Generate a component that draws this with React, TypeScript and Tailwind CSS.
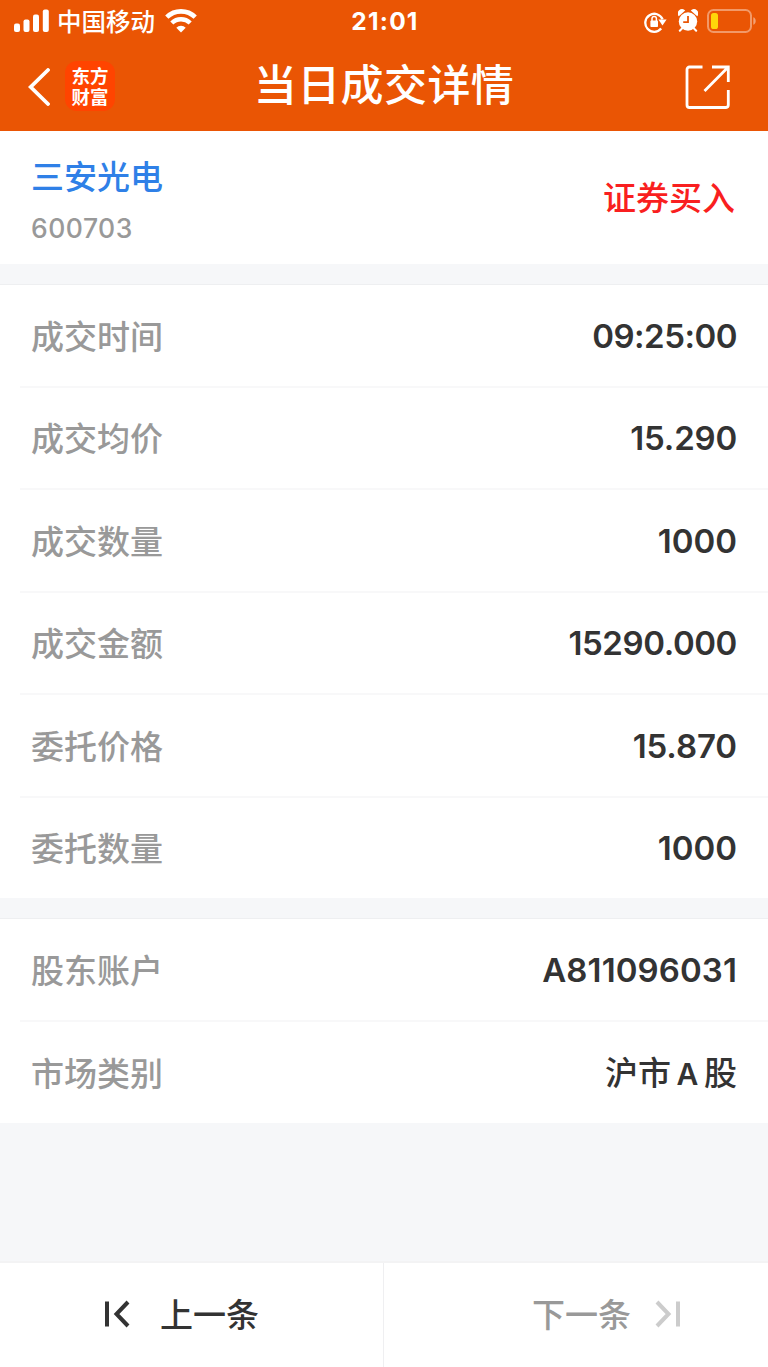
import clsx from "clsx";

const TRADE_ROWS = [
  { label: "成交时间", value: "09:25:00", tracking: "tracking-[-0.5px]" },
  { label: "成交均价", value: "15.290", tracking: "tracking-[-0.2px]" },
  { label: "成交数量", value: "1000", tracking: "tracking-normal" },
  { label: "成交金额", value: "15290.000", tracking: "tracking-[-0.4px]" },
  { label: "委托价格", value: "15.870", tracking: "tracking-[-0.1px]" },
  { label: "委托数量", value: "1000", tracking: "tracking-normal" },
];

function StatusBar() {
  return (
    <div className="grid h-[43px] grid-cols-[1fr_auto_1fr] items-center pr-3 pl-3.5">
      <div className="flex items-center">
        <svg className="-mt-0.5" width="36" height="24" viewBox="0 0 36 24" fill="white">
          <rect x="0" y="14.5" width="6" height="8.5" rx="2" />
          <rect x="9.5" y="10.5" width="6" height="12.5" rx="2" />
          <rect x="19" y="5.5" width="6" height="17.5" rx="2" />
          <rect x="28.8" y="0.5" width="6" height="22.5" rx="2" />
        </svg>
        <span className="mt-0.5 ml-[7px] text-[24.5px] leading-none font-medium">中国移动</span>
        <svg className="-mt-0.5 ml-2.5" width="32" height="24" viewBox="0 0 32 24" fill="none" stroke="white">
          <path d="M1.8 8.2a20.2 20.2 0 0 1 28.4 0" strokeWidth="4.6" />
          <path d="M6.8 14a13.2 13.2 0 0 1 18.4 0" strokeWidth="4.4" />
          <path d="M16 23.5l-4.7-4.8a6.8 6.8 0 0 1 9.4 0z" fill="white" stroke="none" />
        </svg>
      </div>
      <span className="text-[24.5px] leading-none font-bold tracking-[1.2px]">21:01</span>
      <div className="flex items-center justify-end">
        <svg width="23" height="22" viewBox="0 0 23 22" fill="none" stroke="white">
          <path d="M17.2 17.6A9 9 0 1 1 18.6 8.3" strokeWidth="2.3" />
          <path d="M14.4 8.6h8.2l-4.1 6z" fill="white" stroke="none" />
          <rect x="6.4" y="9.6" width="7.6" height="6.4" rx="0.8" fill="white" stroke="none" />
          <path d="M8 10.2V7.6a2.2 2.2 0 0 1 4.4 0v2.6" strokeWidth="1.5" />
        </svg>
        <svg className="-mt-0.5 ml-[11px]" width="20" height="23" viewBox="0 0 20 23">
          <circle cx="10" cy="12.5" r="9.2" fill="white" />
          <path d="M0.8 7.2A4 4 0 0 1 7.2 1.5zM19.2 7.2A4 4 0 0 0 12.8 1.5z" fill="white" />
          <path d="M4 19.5l-2.2 2.3M16 19.5l2.2 2.3" stroke="white" strokeWidth="2" strokeLinecap="round" />
          <path d="M10 7v6.2H5.2" fill="none" stroke="#ea5504" strokeWidth="1.8" />
        </svg>
        <svg className="-mt-0.5 ml-[9px]" width="49" height="24" viewBox="0 0 49 24">
          <rect x="1" y="1" width="43" height="22" rx="5.5" fill="none" stroke="white" strokeOpacity=".4" strokeWidth="2" />
          <rect x="4" y="4" width="7" height="16" rx="2.6" fill="#ffd60a" />
          <path d="M46.3 8.2c3.2 1.2 3.2 6.4 0 7.6z" fill="white" fillOpacity=".45" />
        </svg>
      </div>
    </div>
  );
}

function NavBar() {
  return (
    <div className="grid h-[88px] grid-cols-[1fr_auto_1fr] items-center pr-[38px] pl-7">
      <div className="flex items-center">
        <svg width="22" height="38" viewBox="0 0 22 38" fill="none" stroke="white" strokeWidth="3.8">
          <path d="M20 2L2.7 19 20 36" strokeLinecap="round" />
        </svg>
        <div className="-mt-0.5 ml-[15px] flex h-[50px] w-[50px] flex-col items-center justify-center rounded-xl bg-[#ff4400] pt-0.5 text-[18.5px] leading-[21px] font-bold">
          <span>东方</span>
          <span>财富</span>
        </div>
      </div>
      <h1 className="-mt-1 ml-[10px] text-[43px] leading-none font-medium tracking-[0.4px]">当日成交详情</h1>
      <svg className="justify-self-end" width="46" height="46" viewBox="0 0 46 46" fill="none" stroke="white" strokeWidth="2.8">
        <path d="M18.5 3H5.5A2.5 2.5 0 0 0 3 5.5V41A2.5 2.5 0 0 0 5.5 43.5H42A2.5 2.5 0 0 0 44.3 41V26" />
        <path d="M28 3H44.3V18M44 3.3L20.5 27" />
      </svg>
    </div>
  );
}

type DetailRowProps = {
  label: string;
  value: React.ReactNode;
  tracking?: string;
  last?: boolean;
};

function DetailRow({ label, value, tracking, last = false }: DetailRowProps) {
  return (
    <div
      className={clsx(
        "ml-5 flex flex-1 items-center justify-between pt-1 pr-[31px] pl-[11px]",
        !last && "border-b-2 border-[#f8f8f9]",
      )}
    >
      <span className="text-[33px] leading-none font-medium text-[#999999]">{label}</span>
      <span className={clsx("-mt-0.5 text-[33px] leading-none font-semibold text-[#333333]", tracking)}>{value}</span>
    </div>
  );
}

export default function App() {
  return (
    <div className="flex h-[1367px] w-[768px] flex-col overflow-hidden bg-[#f6f7f9] font-[Inter,'Noto_Sans_CJK_SC',sans-serif]">
      <header className="h-[131px] shrink-0 bg-[#ea5504] text-white">
        <StatusBar />
        <NavBar />
      </header>

      <section className="flex h-[133px] shrink-0 items-center justify-between bg-white pt-1 pr-[33px] pl-[31px]">
        <div className="flex flex-col">
          <span className="text-[33px] leading-[44px] font-medium text-[#2f80e7]">三安光电</span>
          <span className="mt-3 text-[26.5px] leading-[34px] font-medium tracking-[0.5px] text-[#999999]">600703</span>
        </div>
        <span className="-mt-0.5 text-[33px] leading-none font-medium text-[#f91f20]">证券买入</span>
      </section>

      <section className="mt-[21px] flex h-[613px] shrink-0 flex-col bg-white shadow-[0_-1px_0_#eeeff1]">
        {TRADE_ROWS.map((row, i) => (
          <DetailRow key={row.label} {...row} last={i === TRADE_ROWS.length - 1} />
        ))}
      </section>

      <section className="mt-[21px] flex h-[204px] shrink-0 flex-col bg-white shadow-[0_-1px_0_#eeeff1]">
        <DetailRow label="股东账户" value="A811096031" tracking="tracking-[0.1px]" />
        <DetailRow
          label="市场类别"
          value={
            <span className="font-medium [word-spacing:-3.2px]">
              沪市 <span className="text-[30px] font-semibold">A</span> 股
            </span>
          }
          last
        />
      </section>

      <footer className="mt-auto grid h-[106px] shrink-0 grid-cols-[384px_1fr] border-t-2 border-[#f3f3f4] bg-white text-[33px] leading-none font-medium">
        <button className="flex items-center border-r border-[#efeff1] pl-[104px] text-[#333333]">
          <svg className="-mt-0.5" width="26" height="28" viewBox="0 0 26 28" fill="none" stroke="currentColor" strokeWidth="4">
            <path d="M3 1.5v25M24 2L12.5 14 24 26" />
          </svg>
          <span className="ml-[30px]">上一条</span>
        </button>
        <button className="flex items-center pl-[148px] text-[#999999]">
          <span>下一条</span>
          <svg className="-mt-0.5 ml-6 text-[#cccccc]" width="26" height="28" viewBox="0 0 26 28" fill="none" stroke="currentColor" strokeWidth="4">
            <path d="M23 1.5v25M2 2l11.5 12L2 26" />
          </svg>
        </button>
      </footer>
    </div>
  );
}
